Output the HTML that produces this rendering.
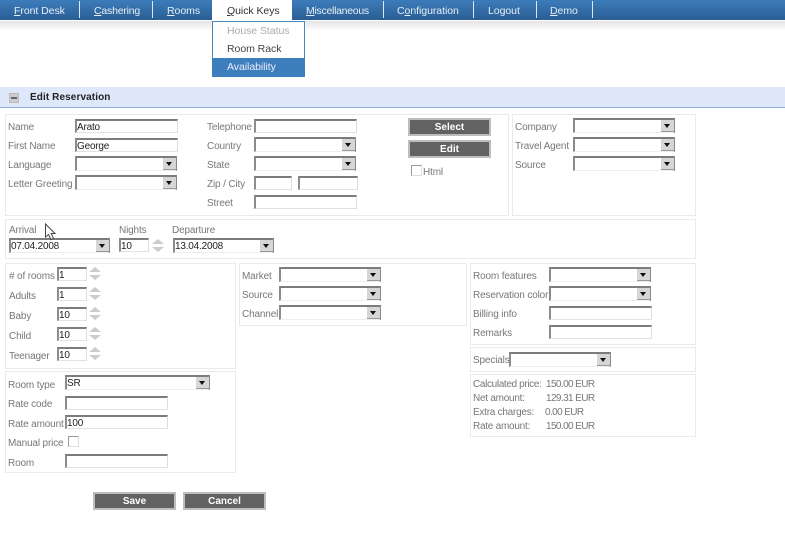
<!DOCTYPE html>
<html><head><meta charset="utf-8"><style>
html,body{margin:0;padding:0;background:#fff}
body{width:785px;height:533px;overflow:hidden;position:relative;font-family:"Liberation Sans",sans-serif;font-size:10px;color:#777}
#w{left:0;top:0;width:785px;height:533px;overflow:hidden;filter:blur(.35px)}
div,span.a{position:absolute;box-sizing:border-box}
.t{white-space:nowrap;line-height:12px;letter-spacing:-.15px;margin-top:4px}
.v{letter-spacing:-.6px}
.n{font-size:10.5px;line-height:14px;top:4px;white-space:nowrap;color:#e6eef6;letter-spacing:-.05px}
.s{top:1px;width:1px;height:17px;background:#dfe8f2}
.p{border:1px solid #e9e9ef}
.i,.c{border-top:2px solid #7c7c7c;border-left:2px solid #8c8c8c;border-right:1px solid #ddd;border-bottom:1px solid #e2e2e2;background:#fff;height:14px;color:#222;line-height:13px;letter-spacing:-.2px;white-space:nowrap;overflow:hidden}
.c{height:15px;border-right:2px solid #888;border-bottom:1px solid #eee;overflow:visible}
.c::after{content:"";position:absolute;right:-1px;top:0;width:13px;height:12px;background:#d6d6d6;border-bottom:1px solid #999;box-sizing:border-box}
.c::before{content:"";position:absolute;z-index:2;right:3px;top:4px;border:3px solid transparent;border-top:4px solid #111;border-bottom:0}
.b{border:2px solid #bdbdbd;background:#626262;color:#fff;font-weight:bold;text-align:center;line-height:15px;font-size:10px;height:18px;width:83px}
.k{width:11px;height:11px;border:1px solid #999;border-right-color:#ddd;border-bottom-color:#ddd;background:#fff}
.sp{width:13px;height:14px}
.sp::before{content:"";position:absolute;left:1px;top:0;border:6px solid transparent;border-top:0;border-bottom:5px solid #ccc}
.sp::after{content:"";position:absolute;left:1px;top:8px;border:6px solid transparent;border-bottom:0;border-top:5px solid #ccc}
</style></head><body><div id="w">
<div style="left:0;top:0;width:785px;height:20px;background:linear-gradient(#3c7cbb,#2a5e93)"></div>
<div style="left:0;top:20px;width:785px;height:1px;background:#fff"></div>
<div style="left:0;top:21px;width:785px;height:10px;background:linear-gradient(#e4e4e8,#fff)"></div>
<div class="n" style="left:14px"><u>F</u>ront Desk</div><div class="s" style="left:79px"></div>
<div class="n" style="left:94px;letter-spacing:-.2px"><u>C</u>ashering</div><div class="s" style="left:152px"></div>
<div class="n" style="left:167px"><u>R</u>ooms</div>
<div style="left:212px;top:0;width:80px;height:20px;background:#fff"></div>
<div class="n" style="left:227px;color:#333"><u>Q</u>uick Keys</div>
<div class="n" style="left:306px;letter-spacing:-.28px"><u>M</u>iscellaneous</div><div class="s" style="left:383px"></div>
<div class="n" style="left:397px">C<u>o</u>nfiguration</div><div class="s" style="left:473px"></div>
<div class="n" style="left:488px">Logout</div><div class="s" style="left:536px"></div>
<div class="n" style="left:550px"><u>D</u>emo</div><div class="s" style="left:592px"></div>
<div style="left:212px;top:21px;width:93px;height:56px;background:#fff;border:1px solid #4a86c0"></div>
<div class="n" style="left:227px;top:24px;color:#aaa">House Status</div>
<div class="n" style="left:227px;top:42px;color:#444">Room Rack</div>
<div style="left:212px;top:58px;width:93px;height:19px;background:#3d7ebd"></div>
<div class="n" style="left:227px;top:60px;color:#eef">Availability</div>
<div style="left:0;top:87px;width:785px;height:21px;background:#dfe7fa;border-bottom:1px solid #92b2e8"></div>
<div style="left:9px;top:93px;width:10px;height:10px;background:#ccc;border:1px solid #bbb"></div>
<div style="left:11px;top:97px;width:6px;height:2px;background:#666"></div>
<div class="t" style="left:30px;top:88px;color:#222;font-weight:bold;letter-spacing:.1px">Edit Reservation</div>

<div class="p" style="left:5px;top:114px;width:504px;height:102px"></div>
<div class="p" style="left:512px;top:114px;width:184px;height:102px"></div>
<div class="p" style="left:5px;top:219px;width:691px;height:40px"></div>
<div class="p" style="left:5px;top:263px;width:231px;height:106px"></div>
<div class="p" style="left:5px;top:371px;width:231px;height:102px"></div>
<div class="p" style="left:239px;top:263px;width:228px;height:63px"></div>
<div class="p" style="left:470px;top:263px;width:226px;height:82px"></div>
<div class="p" style="left:470px;top:347px;width:226px;height:25px"></div>
<div class="p" style="left:470px;top:374px;width:226px;height:63px"></div>

<div class="t" style="left:8px;top:118px">Name</div><div class="i" style="left:75px;top:119px;width:103px">Arato</div>
<div class="t" style="left:8px;top:137px">First Name</div><div class="i" style="left:75px;top:138px;width:103px">George</div>
<div class="t" style="left:8px;top:156px">Language</div><div class="c" style="left:75px;top:156px;width:102px"></div>
<div class="t" style="left:8px;top:175px">Letter Greeting</div><div class="c" style="left:75px;top:175px;width:102px"></div>

<div class="t" style="left:207px;top:118px">Telephone</div><div class="i" style="left:254px;top:119px;width:103px"></div>
<div class="t" style="left:207px;top:137px">Country</div><div class="c" style="left:254px;top:137px;width:102px"></div>
<div class="t" style="left:207px;top:156px">State</div><div class="c" style="left:254px;top:156px;width:102px"></div>
<div class="t" style="left:207px;top:175px">Zip / City</div><div class="i" style="left:254px;top:176px;width:38px"></div><div class="i" style="left:298px;top:176px;width:60px"></div>
<div class="t" style="left:207px;top:194px">Street</div><div class="i" style="left:254px;top:195px;width:103px"></div>

<div class="b" style="left:408px;top:118px">Select</div>
<div class="b" style="left:408px;top:140px">Edit</div>
<div class="k" style="left:411px;top:165px"></div><div class="t" style="left:423px;top:163px">Html</div>

<div class="t" style="left:515px;top:118px">Company</div><div class="c" style="left:573px;top:118px;width:102px"></div>
<div class="t" style="left:515px;top:137px">Travel Agent</div><div class="c" style="left:573px;top:137px;width:102px"></div>
<div class="t" style="left:515px;top:156px">Source</div><div class="c" style="left:573px;top:156px;width:102px"></div>

<div class="t" style="left:9px;top:221px">Arrival</div><div class="c" style="left:9px;top:238px;width:101px">07.04.2008</div>
<div class="t" style="left:119px;top:221px">Nights</div><div class="i" style="left:119px;top:238px;width:30px">10</div><div class="sp" style="left:151px;top:239px"></div>
<div class="t" style="left:172px;top:221px">Departure</div><div class="c" style="left:173px;top:238px;width:101px">13.04.2008</div>

<div class="t" style="left:9px;top:267px"># of rooms</div><div class="i" style="left:57px;top:267px;width:30px">1</div><div class="sp" style="left:88px;top:267px"></div>
<div class="t" style="left:9px;top:287px">Adults</div><div class="i" style="left:57px;top:287px;width:30px">1</div><div class="sp" style="left:88px;top:287px"></div>
<div class="t" style="left:9px;top:307px">Baby</div><div class="i" style="left:57px;top:307px;width:30px">10</div><div class="sp" style="left:88px;top:307px"></div>
<div class="t" style="left:9px;top:327px">Child</div><div class="i" style="left:57px;top:327px;width:30px">10</div><div class="sp" style="left:88px;top:327px"></div>
<div class="t" style="left:9px;top:347px">Teenager</div><div class="i" style="left:57px;top:347px;width:30px">10</div><div class="sp" style="left:88px;top:347px"></div>

<div class="t" style="left:8px;top:376px">Room type</div><div class="c" style="left:65px;top:375px;width:145px">SR</div>
<div class="t" style="left:8px;top:395px">Rate code</div><div class="i" style="left:65px;top:396px;width:103px"></div>
<div class="t" style="left:8px;top:415px">Rate amount</div><div class="i" style="left:65px;top:415px;width:103px">100</div>
<div class="t" style="left:8px;top:434px">Manual price</div><div class="k" style="left:68px;top:436px"></div>
<div class="t" style="left:8px;top:454px">Room</div><div class="i" style="left:65px;top:454px;width:103px"></div>

<div class="b" style="left:93px;top:492px">Save</div>
<div class="b" style="left:183px;top:492px">Cancel</div>

<div class="t" style="left:242px;top:267px">Market</div><div class="c" style="left:279px;top:267px;width:102px"></div>
<div class="t" style="left:242px;top:286px">Source</div><div class="c" style="left:279px;top:286px;width:102px"></div>
<div class="t" style="left:242px;top:305px">Channel</div><div class="c" style="left:279px;top:305px;width:102px"></div>

<div class="t" style="left:473px;top:267px">Room features</div><div class="c" style="left:549px;top:267px;width:102px"></div>
<div class="t" style="left:473px;top:286px">Reservation color</div><div class="c" style="left:549px;top:286px;width:102px"></div>
<div class="t" style="left:473px;top:305px">Billing info</div><div class="i" style="left:549px;top:306px;width:103px"></div>
<div class="t" style="left:473px;top:324px">Remarks</div><div class="i" style="left:549px;top:325px;width:103px"></div>
<div class="t" style="left:473px;top:351px">Specials</div><div class="c" style="left:509px;top:352px;width:102px"></div>

<div class="t" style="left:473px;top:375px;letter-spacing:-.35px">Calculated price:</div><div class="t v" style="left:546px;top:375px">150.00 EUR</div>
<div class="t" style="left:473px;top:389px;letter-spacing:-.25px">Net amount:</div><div class="t v" style="left:546px;top:389px">129.31 EUR</div>
<div class="t" style="left:473px;top:403px;letter-spacing:-.25px">Extra charges:</div><div class="t v" style="left:545px;top:403px">0.00 EUR</div>
<div class="t" style="left:473px;top:417px;letter-spacing:-.25px">Rate amount:</div><div class="t v" style="left:546px;top:417px">150.00 EUR</div>

<svg style="position:absolute;left:44px;top:223px" width="14" height="18" viewBox="0 0 14 18"><path d="M1.5 1V14L4.5 11.5L7 16.5L9.5 15.3L7.2 10.5H11Z" fill="#fff" stroke="#444" stroke-width="1"/></svg>
</div></body></html>
